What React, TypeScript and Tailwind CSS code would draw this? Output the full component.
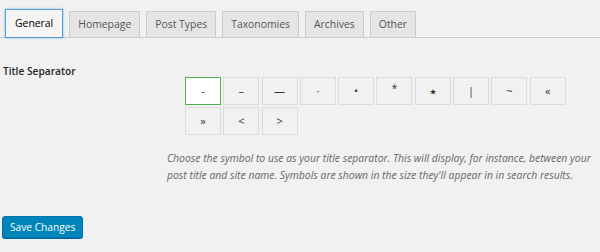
import React, { useState } from 'react';

const TABS = ['General', 'Homepage', 'Post Types', 'Taxonomies', 'Archives', 'Other'];

const SEPARATORS = ['-', '–', '—', '·', '•', '*', '⋆', '|', '~', '«', '»', '<', '>'];

export default function App() {
  const [activeTab, setActiveTab] = useState('General');
  const [separator, setSeparator] = useState('-');

  return (
    <div className="w-[600px] h-[252px] bg-[#f1f1f1] overflow-hidden font-['Open_Sans',sans-serif] text-[#444]">
      {/* Tabs */}
      <div className="flex items-end gap-[6px] pl-[5px] pt-[9px] border-b border-[#ccc] h-[38px]">
        {TABS.map((tab) =>
          tab === activeTab ? (
            <button
              key={tab}
              onClick={() => setActiveTab(tab)}
              className="h-[29px] -mb-px px-[9px] bg-[#f5f5f5] border border-[#5b9dd9] shadow-[0_0_2px_rgba(30,140,190,0.6)] text-[10.4px] font-medium text-black leading-none"
            >
              {tab}
            </button>
          ) : (
            <button
              key={tab}
              onClick={() => setActiveTab(tab)}
              className="h-[26px] px-[8px] bg-[#e5e5e5] border border-b-0 border-[#ccc] text-[10.4px] font-medium text-[#555] leading-none"
            >
              {tab}
            </button>
          )
        )}
      </div>

      {/* Title separator */}
      <div className="flex">
        <div className="w-[185px] pl-[3px] pt-[26px] text-[10.2px] font-semibold text-[#23282d]">
          Title Separator
        </div>
        <div className="pt-[39px] w-[385px] flex flex-wrap gap-x-[2.3px] gap-y-[2px]">
          {SEPARATORS.map((s) => (
            <button
              key={s}
              onClick={() => setSeparator(s)}
              className={`w-[36px] h-[28px] flex items-center justify-center text-[#333] border ${
                s === '⋆' ? 'text-[16px]' : s === '*' ? 'text-[10px] pb-[5px]' : 'text-[11px]'
              } ${separator === s ? 'bg-white border-[#4caf50] border-[1.5px]' : 'bg-[#f1f1f1] border-[#dcdcdc]'}`}
            >
              {s}
            </button>
          ))}
        </div>
      </div>

      <p className="pl-[167px] mt-[15px] text-[10.4px] leading-[17px] italic text-[#666]">
        Choose the symbol to use as your title separator. This will display, for instance, between your post
        title and site name. Symbols are shown in the size they'll appear in in search results.
      </p>

      <div className="pl-[2px] mt-[29px]">
        <button className="h-[22px] px-[7px] bg-[#0085ba] border border-[#0073aa] rounded-[3px] text-white text-[10.2px] leading-none shadow-[0_1px_0_#006799]">
          Save Changes
        </button>
      </div>
    </div>
  );
}
